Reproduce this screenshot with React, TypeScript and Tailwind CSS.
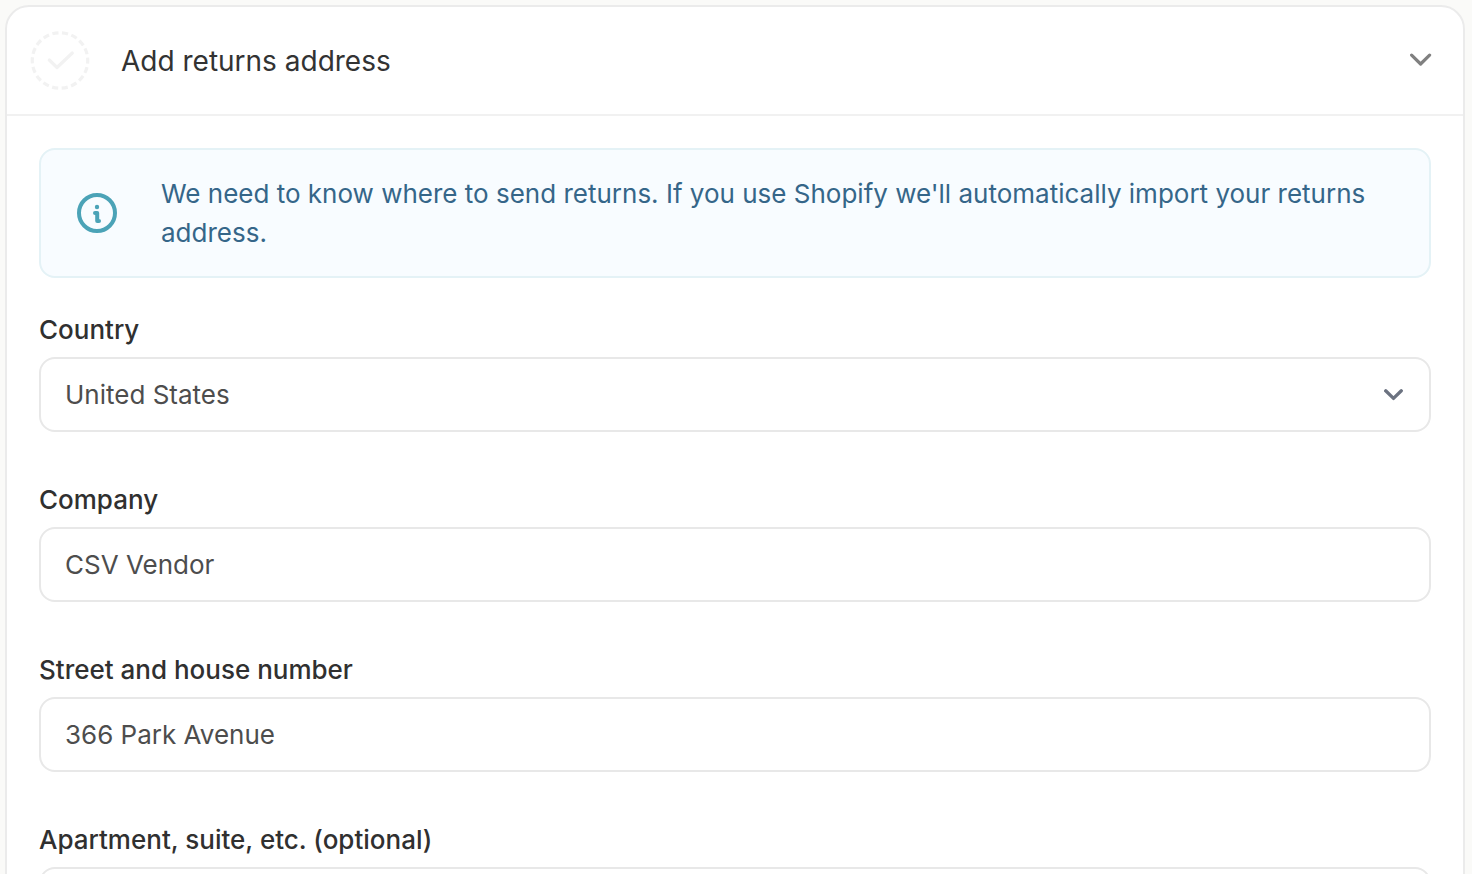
import { useId, useState } from "react";
import type { ReactNode } from "react";

const controlClass =
  "block h-[75px] w-full appearance-none rounded-2xl border-2 border-[#e8e8e8] bg-white px-6 text-[26px] leading-[39px] text-[#4d4d4d] outline-none focus:border-[#4ba3b7]";

function StepIcon() {
  return (
    <svg viewBox="0 0 60 60" className="size-[60px] shrink-0" fill="none" stroke="#f2f2f2" aria-hidden="true">
      <circle cx="30" cy="29.5" r="27.75" strokeWidth="3.2" strokeDasharray="6.2 3.486" strokeDashoffset="3.1" />
      <path d="M19.3 29 L27 36.5 L42.3 22" strokeWidth="3.2" strokeLinecap="round" strokeLinejoin="round" />
    </svg>
  );
}

function InfoIcon() {
  return (
    <svg viewBox="0 0 40 40" className="size-10 shrink-0" fill="none" stroke="#4ba3b7" aria-hidden="true">
      <circle cx="20" cy="20" r="18" strokeWidth="4" />
      <circle cx="20" cy="14" r="2.2" fill="#4ba3b7" stroke="none" />
      <path d="M18 20 H20.2 V28 H22" strokeWidth="4" strokeLinecap="round" strokeLinejoin="round" />
    </svg>
  );
}

function Field({ label, children }: { label: string; children: (id: string) => ReactNode }) {
  const id = useId();
  return (
    <div className="flex flex-col gap-2">
      <label htmlFor={id} className="text-[26px] leading-[39px] font-medium text-[#303030]">
        {label}
      </label>
      {children(id)}
    </div>
  );
}

function TextField({ label, initial }: { label: string; initial: string }) {
  const [value, setValue] = useState(initial);
  return (
    <Field label={label}>
      {(id) => (
        <input id={id} type="text" value={value} onChange={(e) => setValue(e.target.value)} className={controlClass} />
      )}
    </Field>
  );
}

export default function App() {
  const [open, setOpen] = useState(true);
  return (
    <main className="h-screen overflow-hidden bg-[#fafaf8] pt-[5px] pr-[7px] pl-[5px] font-['Inter',sans-serif]">
      <section className="min-h-full rounded-3xl border-2 border-[#ebebeb] bg-white">
        <h2 className="border-b-2 border-[#f1f1f1]">
          <button
            type="button"
            aria-expanded={open}
            onClick={() => setOpen(!open)}
            className="flex w-full items-center gap-[31px] pt-6 pr-[31px] pb-[23px] pl-[23px] text-left text-[28px] leading-[59px] text-[#333333]"
          >
            <StepIcon />
            <span className="flex-1">Add returns address</span>
            <svg viewBox="0 0 22 16" className="h-4 w-[22px]" fill="none" aria-hidden="true">
              <path d="M1.6 2.1 L10.6 11 L19.6 2.1" stroke="#808080" strokeWidth="3.2" strokeLinecap="round" strokeLinejoin="round" />
            </svg>
          </button>
        </h2>
        {open && (
          <form className="p-8">
            <div className="mb-8 flex items-center gap-11 rounded-2xl border-2 border-[#e4f2f6] bg-[#f8fcff] py-6 pr-10 pl-9">
              <InfoIcon />
              <p className="text-[26px] leading-[39px] text-[#356689]">
                We need to know where to send returns. If you use Shopify we'll automatically import your returns
                address.
              </p>
            </div>
            <div className="flex flex-col gap-12">
              <Field label="Country">
                {(id) => (
                  <div className="grid items-center">
                    <select id={id} className={`${controlClass} col-start-1 row-start-1`}>
                      <option>United States</option>
                      <option>Canada</option>
                      <option>United Kingdom</option>
                    </select>
                    <svg
                      viewBox="0 0 20 12"
                      className="pointer-events-none col-start-1 row-start-1 mr-[27px] h-3 w-5 justify-self-end"
                      fill="none"
                      aria-hidden="true"
                    >
                      <path d="M1.7 1.8 L9.5 9.4 L17.3 1.8" stroke="#6b7280" strokeWidth="3.3" strokeLinecap="round" strokeLinejoin="round" />
                    </svg>
                  </div>
                )}
              </Field>
              <TextField label="Company" initial="CSV Vendor" />
              <TextField label="Street and house number" initial="366 Park Avenue" />
              <TextField label="Apartment, suite, etc. (optional)" initial="" />
            </div>
          </form>
        )}
      </section>
    </main>
  );
}
